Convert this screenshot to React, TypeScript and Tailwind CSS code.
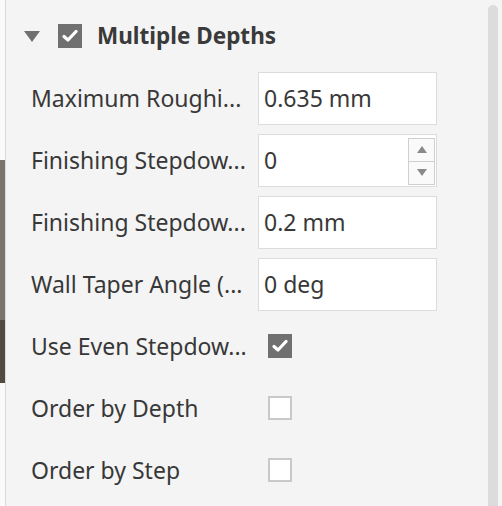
import React from "react";

type Row =
  | { kind: "input"; label: string; value: string; spinner?: boolean }
  | { kind: "check"; label: string; checked: boolean };

// labels are elided the same way the panel shows them
const rows: Row[] = [
  { kind: "input", label: "Maximum Roughi...", value: "0.635 mm" },
  { kind: "input", label: "Finishing Stepdow...", value: "0", spinner: true },
  { kind: "input", label: "Finishing Stepdow...", value: "0.2 mm" },
  { kind: "input", label: "Wall Taper Angle (...", value: "0 deg" },
  { kind: "check", label: "Use Even Stepdow...", checked: true },
  { kind: "check", label: "Order by Depth", checked: false },
  { kind: "check", label: "Order by Step", checked: false },
];

function CheckBox({ checked }: { checked: boolean }) {
  if (!checked) {
    return <div className="w-[24px] h-[24px] bg-white border-2 border-[#c9c9c9]" />;
  }
  return (
    <div className="w-[24px] h-[24px] bg-[#707070] flex items-center justify-center">
      <svg width="16" height="14" viewBox="0 0 16 14">
        <path d="M2 7.5 L6 11 L14 2.5" fill="none" stroke="white" strokeWidth="3.2" strokeLinecap="round" strokeLinejoin="round" />
      </svg>
    </div>
  );
}

function Spinner() {
  return (
    <div className="self-stretch mt-[3px] mb-[1px] w-[27px] border border-[#cfcfcf] bg-[#fafafa] flex flex-col">
      <div className="flex-1 flex items-center justify-center border-b border-[#cfcfcf]">
        <svg width="10" height="7" viewBox="0 0 10 7">
          <path d="M0 7 L5 0 L10 7 Z" fill="#8a8a8a" />
        </svg>
      </div>
      <div className="flex-1 flex items-center justify-center">
        <svg width="10" height="7" viewBox="0 0 10 7">
          <path d="M0 0 L10 0 L5 7 Z" fill="#8a8a8a" />
        </svg>
      </div>
    </div>
  );
}

export default function App() {
  return (
    <div
      className="w-[502px] h-[506px] flex overflow-hidden bg-[#f4f4f4] text-[#383838]"
      style={{ fontFamily: '"Noto Sans", "Open Sans", sans-serif' }}
    >
      {/* viewport edge */}
      <div className="w-[5px] bg-[#fafafa] flex flex-col">
        <div className="h-[160px]" />
        <div className="h-[160px] bg-[#7b746b]" />
        <div className="h-[63px] bg-[#504a43]" />
      </div>

      <div className="flex-1 border-l border-[#dadada] flex">
        <div className="flex-1 flex flex-col pt-[5px]">
          {/* group header */}
          <div className="h-[62px] flex items-center pl-[18px]">
            <svg width="16" height="11" viewBox="0 0 16 11">
              <path d="M0 0 L16 0 L8 11 Z" fill="#707070" />
            </svg>
            <div className="ml-[18px]">
              <CheckBox checked />
            </div>
            <span className="ml-[15px] text-[22.5px] font-bold text-[#3a3a3a]">Multiple Depths</span>
          </div>

          {rows.map((r, i) => (
            <div key={i} className="h-[62px] flex items-center pl-[25px]">
              <div className="w-[227px] text-[23px] whitespace-nowrap">{r.label}</div>
              {r.kind === "input" ? (
                <div className="w-[179px] h-[53px] bg-white border border-[#dcdcdc] flex items-center pl-[5px] pr-[1px]">
                  <span className="flex-1 text-[23px]">{r.value}</span>
                  {r.spinner && <Spinner />}
                </div>
              ) : (
                <div className="pl-[10px]">
                  <CheckBox checked={r.checked} />
                </div>
              )}
            </div>
          ))}
        </div>
        <div className="w-[10px] mt-[5px] mr-[4px] rounded-t-full bg-[#dcdcdc]" />
      </div>
    </div>
  );
}
